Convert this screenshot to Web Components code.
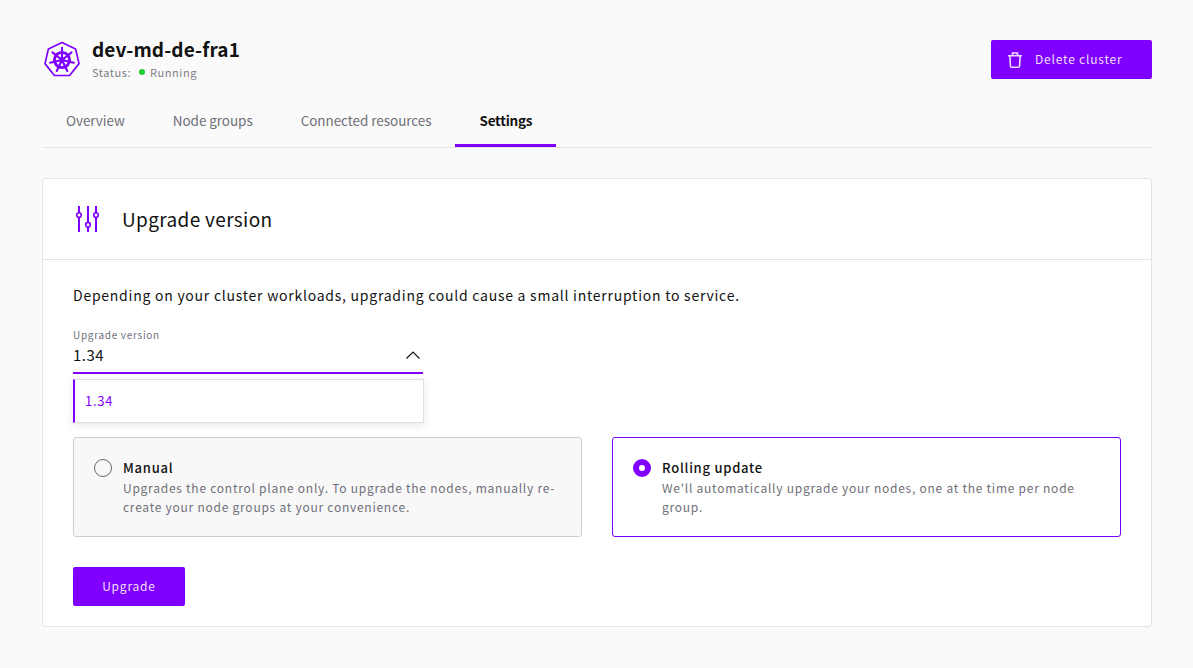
<!DOCTYPE html>
<html lang="en">
<head>
<meta charset="utf-8">
<title>dev-md-de-fra1</title>
<style>
  html, body { margin: 0; height: 100%; }
  body {
    background: #fafafa;
    color: #121212;
    font-family: "Noto Sans CJK JP", "Noto Sans", sans-serif;
  }
</style>
</head>
<body>
<cluster-page>
  <cluster-header slot="header" name="dev-md-de-fra1" status="Running"></cluster-header>
  <tab-bar slot="tabs">
    <tab-item>Overview</tab-item>
    <tab-item>Node groups</tab-item>
    <tab-item>Connected resources</tab-item>
    <tab-item active>Settings</tab-item>
  </tab-bar>
  <settings-card heading="Upgrade version">
    <p class="lead">Depending on your cluster workloads, upgrading could cause a small interruption to service.</p>
    <version-select label="Upgrade version" value="1.34"></version-select>
    <option-row>
      <option-card heading="Manual">Upgrades the control plane only. To upgrade the nodes, manually re-create your node groups at your convenience.</option-card>
      <option-card heading="Rolling update" selected>We'll automatically upgrade your nodes, one at the time per node group.</option-card>
    </option-row>
    <action-button>Upgrade</action-button>
  </settings-card>
</cluster-page>
<script>
class ShadowElement extends HTMLElement {
  constructor() {
    super();
    this.attachShadow({ mode: "open" });
  }
  connectedCallback() {
    this.shadowRoot.innerHTML = `<style>${this.styles}</style>${this.render()}`;
  }
}

class ClusterPage extends ShadowElement {
  styles = `
    :host { display: block; padding: 40px 41px 0 42px; }
    .card { display: block; margin-top: 30px; }
  `;
  render() {
    return `<slot name="header"></slot><slot name="tabs"></slot><div class="card"><slot></slot></div>`;
  }
}

class ClusterHeader extends ShadowElement {
  styles = `
    :host { display: flex; justify-content: space-between; align-items: flex-start; height: 57px; }
    .who { display: flex; align-items: flex-start; gap: 12px; padding-left: 2px; }
    svg { display: block; width: 36px; height: 38px; margin-top: 1px; }
    h1 { margin: -2px 0 0; font-size: 19px; line-height: 21px; font-weight: 700; letter-spacing: .13px; color: #121212; }
    .status { display: flex; align-items: center; margin-top: 4px; font-size: 11px; line-height: 18px; letter-spacing: .55px; color: #7d7d85; }
    .dot { width: 6px; height: 6px; border-radius: 50%; background: #22cc33; margin: 0 5px 0 8px; }
  `;
  render() {
    const spokes = [0, 51.4, 102.8, 154.3, 205.7, 257.1, 308.6]
      .map((a) => `<path transform="rotate(${a} 18 19)" d="M18 19V6.800"/>`)
      .join("");
    return `
      <div class="who">
        <svg viewBox="0 0 36 38" fill="none" stroke="#7f00ff">
          <path d="M18 1.400 31.600 7.900l3.400 14.700-9.400 11.900H10.400L1 22.600 4.400 7.900z" stroke-width="1.700" stroke-linejoin="round"/>
          <circle cx="18" cy="19" r="7.600" stroke-width="2.900"/>
          <g stroke-width="2.100" stroke-linecap="round">${spokes}</g>
          <circle cx="18" cy="19" r="2.800" fill="#7f00ff" stroke="none"/>
        </svg>
        <div>
          <h1>${this.getAttribute("name")}</h1>
          <div class="status">Status:<span class="dot"></span>${this.getAttribute("status")}</div>
        </div>
      </div>
      <action-button icon="trash" wide>Delete cluster</action-button>
    `;
  }
}

class TabBar extends ShadowElement {
  styles = `:host { display: flex; border-bottom: 1px solid #e6e6e6; height: 50px; }`;
  render() { return `<slot></slot>`; }
}

class TabItem extends ShadowElement {
  styles = `
    :host { display: block; box-sizing: border-box; height: 50px; padding: 0 24px; font-size: 13.500px; line-height: 47px; letter-spacing: -.06px; color: #6f6f78; }
    :host([active]) { color: #121212; font-weight: 700; letter-spacing: -.25px; border-bottom: 3px solid #7f00ff; }
  `;
  render() { return `<slot></slot>`; }
}

class SettingsCard extends ShadowElement {
  styles = `
    :host { display: block; box-sizing: border-box; height: 449px; background: #fff; border: 1px solid #e3e3e3; border-radius: 3px; }
    header { display: flex; align-items: center; gap: 21px; height: 81px; padding-left: 32px; border-bottom: 1px solid #e3e3e3; box-sizing: border-box; }
    h2 { margin: 0 0 2px; font-size: 19px; font-weight: 400; letter-spacing: .35px; color: #121212; }
    svg { display: block; width: 26px; height: 28px; }
    .body { padding: 25px 30px 0; }
    ::slotted(.lead) { margin: 0; font-size: 14px; line-height: 20px; letter-spacing: .75px; color: #121212; }
  `;
  render() {
    return `
      <header>
        <svg viewBox="0 0 26 28" fill="none" stroke="#7f00ff" stroke-width="2">
          <path d="M4 1v6.700M4 12.300V27M13 1v16.400M13 22v5M21 1v6.700M21 12.300V27" />
          <circle cx="4" cy="10" r="2.300" stroke-width="1.600"/>
          <circle cx="13" cy="19.700" r="2.300" stroke-width="1.600"/>
          <circle cx="21" cy="10" r="2.300" stroke-width="1.600"/>
        </svg>
        <h2>${this.getAttribute("heading")}</h2>
      </header>
      <div class="body"><slot></slot></div>
    `;
  }
}

class VersionSelect extends ShadowElement {
  styles = `
    :host { display: block; position: relative; width: 350px; margin-top: 23px; height: 109px; }
    .label { font-size: 10px; line-height: 14px; letter-spacing: .7px; color: #6f6f78; }
    .field { display: flex; justify-content: space-between; align-items: center; box-sizing: border-box; height: 32px; padding-bottom: 5px; border-bottom: 2px solid #7f00ff; font-size: 15px; letter-spacing: .5px; color: #121212; }
    svg { display: block; width: 16px; height: 10px; margin-right: 2px; }
    .menu { position: absolute; left: 0; top: 51px; width: 351px; height: 44px; box-sizing: border-box; padding-left: 10px; background: #fff; border: 1px solid #e0e0e0; border-left: 2px solid #7f00ff; box-shadow: 0 2px 8px rgba(0,0,0,.1); font-size: 13px; line-height: 42px; letter-spacing: .75px; color: #7f00ff; }
  `;
  render() {
    const value = this.getAttribute("value");
    return `
      <div class="label">${this.getAttribute("label")}</div>
      <div class="field">${value}
        <svg viewBox="0 0 16 10" fill="none" stroke="#121212" stroke-width="1.200"><path d="M1.500 8.500 8 2l6.500 6.500"/></svg>
      </div>
      <div class="menu">${value}</div>
    `;
  }
}

class OptionRow extends ShadowElement {
  styles = `:host { display: grid; grid-template-columns: 509px 509px; gap: 30px; }`;
  render() { return `<slot></slot>`; }
}

class OptionCard extends ShadowElement {
  styles = `
    :host { display: flex; gap: 11px; box-sizing: border-box; height: 100px; padding: 21px 20px 0; background: #f8f8f8; border: 1px solid #cfcfcf; border-radius: 3px; }
    :host([selected]) { background: #fff; border-color: #7f00ff; }
    .radio { flex: none; box-sizing: border-box; width: 18px; height: 18px; border-radius: 50%; border: 1px solid #66666e; }
    :host([selected]) .radio { border: 6px solid #7f00ff; background: #fff; }
    .title { font-size: 13px; line-height: 20px; font-weight: 500; letter-spacing: .75px; color: #121212; margin-top: -1px; }
    .text { font-size: 12px; line-height: 19px; letter-spacing: .75px; color: #6f6f78; }
  `;
  render() {
    return `
      <span class="radio"></span>
      <div>
        <div class="title">${this.getAttribute("heading")}</div>
        <div class="text"><slot></slot></div>
      </div>
    `;
  }
}

class ActionButton extends ShadowElement {
  styles = `
    :host { display: inline-flex; align-items: center; justify-content: center; gap: 13px; box-sizing: border-box; width: 112px; height: 39px; margin-top: 30px; background: #7f00ff; border-radius: 2px; color: #f0dfff; font-size: 12px; letter-spacing: .8px; }
    :host([wide]) { width: 161px; margin-top: 0; justify-content: flex-start; padding-left: 17px; }
    svg { display: block; width: 14px; height: 16px; }
    span { margin-bottom: 2px; }
  `;
  render() {
    const trash = `<svg viewBox="0 0 14 16" fill="none" stroke="#efdcff" stroke-width="1.600"><path d="M0 3.800h14M1.900 3.800l.5 10.200a1.200 1.200 0 0 0 1.200 1.200h6.800a1.200 1.200 0 0 0 1.200-1.200l.5-10.200M4.500 3.800V1h5v2.800"/></svg>`;
    return `${this.getAttribute("icon") === "trash" ? trash : ""}<span><slot></slot></span>`;
  }
}

customElements.define("cluster-page", ClusterPage);
customElements.define("cluster-header", ClusterHeader);
customElements.define("tab-bar", TabBar);
customElements.define("tab-item", TabItem);
customElements.define("settings-card", SettingsCard);
customElements.define("version-select", VersionSelect);
customElements.define("option-row", OptionRow);
customElements.define("option-card", OptionCard);
customElements.define("action-button", ActionButton);
</script>
</body>
</html>
